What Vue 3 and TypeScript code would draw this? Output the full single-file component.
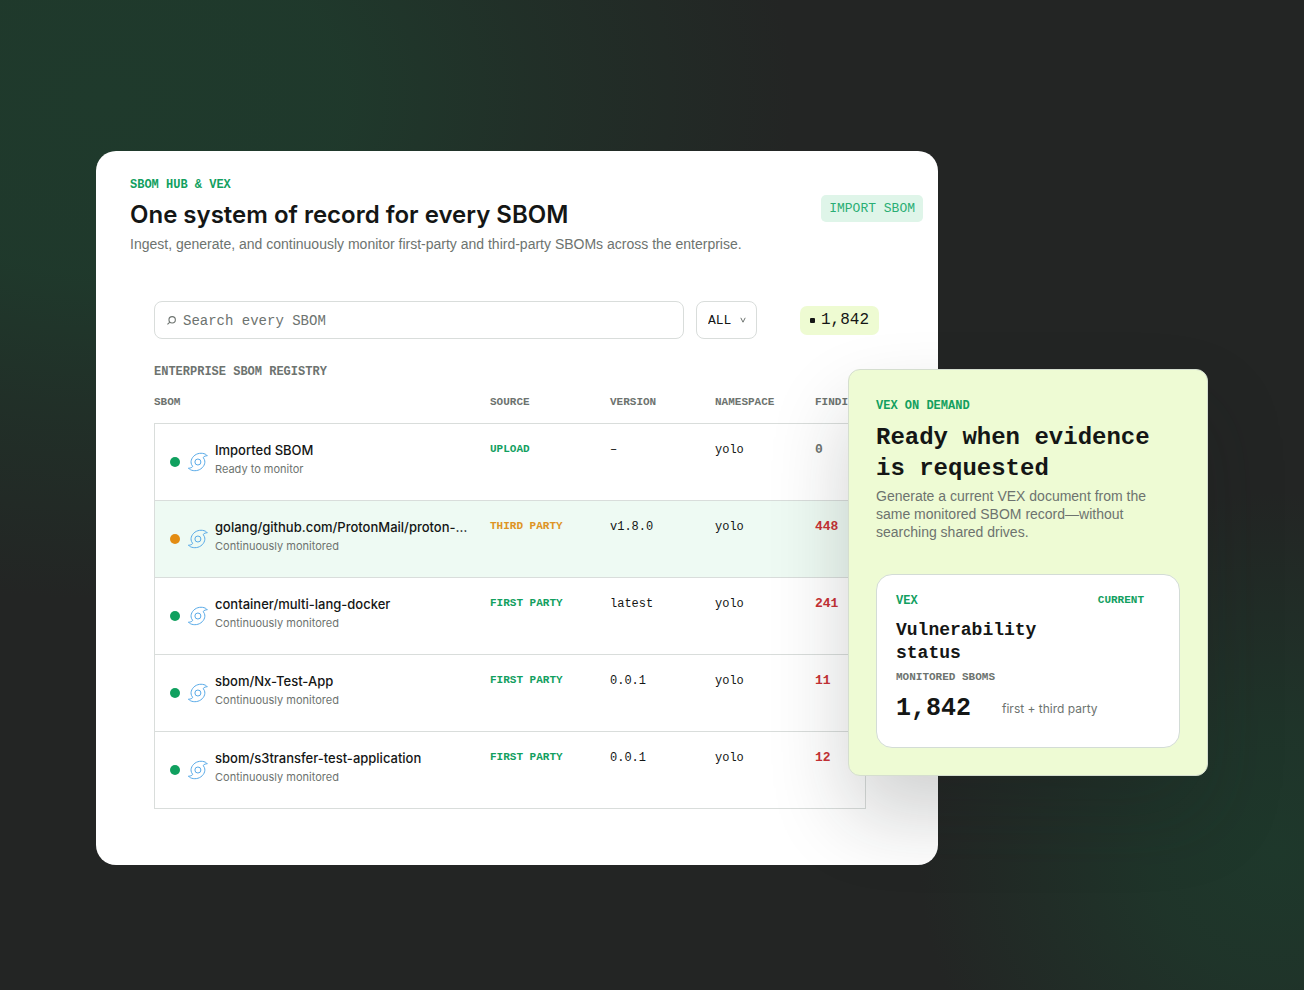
<script setup lang="ts">
import { ref } from 'vue'

interface SbomRow {
  name: string
  note: string
  source: string
  version: string
  namespace: string
  findings: number
  status: 'ok' | 'warn'
}

const rows: SbomRow[] = [
  { name: 'Imported SBOM', note: 'Ready to monitor', source: 'UPLOAD', version: '–', namespace: 'yolo', findings: 0, status: 'ok' },
  { name: 'golang/github.com/ProtonMail/proton-…', note: 'Continuously monitored', source: 'THIRD PARTY', version: 'v1.8.0', namespace: 'yolo', findings: 448, status: 'warn' },
  { name: 'container/multi-lang-docker', note: 'Continuously monitored', source: 'FIRST PARTY', version: 'latest', namespace: 'yolo', findings: 241, status: 'ok' },
  { name: 'sbom/Nx-Test-App', note: 'Continuously monitored', source: 'FIRST PARTY', version: '0.0.1', namespace: 'yolo', findings: 11, status: 'ok' },
  { name: 'sbom/s3transfer-test-application', note: 'Continuously monitored', source: 'FIRST PARTY', version: '0.0.1', namespace: 'yolo', findings: 12, status: 'ok' },
]

const query = ref('')
const filter = ref('ALL')
</script>

<template>
  <main class="stage">
    <div class="scene">
      <section class="hub">
        <header class="hub-head">
          <div>
            <p class="eyebrow">SBOM HUB &amp; VEX</p>
            <h1>One system of record for every SBOM</h1>
            <p class="lead">Ingest, generate, and continuously monitor first-party and third-party SBOMs across the enterprise.</p>
          </div>
          <button class="import" type="button">IMPORT SBOM</button>
        </header>

        <div class="hub-body">
          <div class="toolbar">
            <label class="search">
              <svg viewBox="0 0 10 10" aria-hidden="true">
                <circle cx="5.6" cy="4.4" r="2.9" />
                <path d="M3.5 6.5 1.3 8.6" />
              </svg>
              <input v-model="query" type="text" placeholder="Search every SBOM" aria-label="Search every SBOM" />
            </label>
            <label class="filter">
              <select v-model="filter" aria-label="Filter">
                <option value="ALL">ALL</option>
              </select>
              <svg viewBox="0 0 6 6" aria-hidden="true"><path d="M.8 .8 3 5.2 5.2 .8" /></svg>
            </label>
            <span class="count"><i></i>1,842</span>
          </div>

          <h2>ENTERPRISE SBOM REGISTRY</h2>

          <table>
            <colgroup>
              <col class="c-name" /><col class="c-source" /><col class="c-version" /><col class="c-space" /><col />
            </colgroup>
            <thead>
              <tr>
                <th scope="col">SBOM</th>
                <th scope="col">SOURCE</th>
                <th scope="col">VERSION</th>
                <th scope="col">NAMESPACE</th>
                <th scope="col">FINDINGS</th>
              </tr>
            </thead>
            <tbody>
              <tr v-for="row in rows" :key="row.name" :class="row.status">
                <td>
                  <div class="item">
                    <span class="dot"></span>
                    <svg class="swirl" viewBox="0 0 20 20" aria-hidden="true">
                      <path d="M19.3 3.8C17.4 1.2 12.3.4 8.4 2.3 4.3 4.3 2 8.9 3.5 12.4 3.8 13.2 4.2 13.9 4.7 14.5 3.6 15.7 2.2 16.3.4 16.1 2.5 18.8 7.6 19.5 11.4 17.7 15.6 15.7 17.9 11.1 16.4 7.6 16.1 6.8 15.7 6.1 15.2 5.5 16.3 4.3 17.6 3.6 19.3 3.8Z" />
                      <circle cx="9.9" cy="10" r="3" />
                    </svg>
                    <div class="item-text">
                      <strong>{{ row.name }}</strong>
                      <small>{{ row.note }}</small>
                    </div>
                  </div>
                </td>
                <td class="source">{{ row.source }}</td>
                <td>{{ row.version }}</td>
                <td>{{ row.namespace }}</td>
                <td class="findings" :class="{ none: row.findings === 0 }">{{ row.findings }}</td>
              </tr>
            </tbody>
          </table>
        </div>
      </section>

      <aside class="vex">
        <p class="eyebrow">VEX ON DEMAND</p>
        <h2>Ready when evidence is requested</h2>
        <p class="vex-lead">Generate a current VEX document from the same monitored SBOM record—without searching shared drives.</p>
        <article class="doc">
          <div class="doc-head">
            <span class="eyebrow">VEX</span>
            <span class="current">CURRENT</span>
          </div>
          <h3>Vulnerability status</h3>
          <p class="doc-label">MONITORED SBOMS</p>
          <div class="doc-total">
            <strong>1,842</strong>
            <span>first + third party</span>
          </div>
        </article>
      </aside>
    </div>
  </main>
</template>

<style>
body {
  margin: 0;
  background: #232524;
}
</style>

<style scoped>
* {
  box-sizing: border-box;
}
p, h1, h2, h3 {
  margin: 0;
}
.stage {
  --mono: "Liberation Mono", monospace;
  --copy: "Liberation Sans", Arial, sans-serif;
  --green: #12a05f;
  --ink: #141615;
  --muted: #6d736f;
  --line: #d9dddb;
  min-height: 100vh;
  padding: 151px 96px 125px;
  font-family: Inter, sans-serif;
  color: var(--ink);
  background:
    radial-gradient(ellipse 690px 500px at 8% 10%, #1f3a2c 0%, #1f3a2cf0 35%, #1f3a2c80 62%, #1f3a2c00 100%),
    radial-gradient(ellipse 360px 360px at 98% 86%, #1e382b 0%, #1e382bcc 35%, #1e382b00 100%),
    #232524;
}
.scene {
  position: relative;
}
.hub {
  margin-right: 270px;
  padding: 25px 0 56px;
  border-radius: 20px;
  background: #fff;
  overflow: hidden;
}
.hub-head {
  display: flex;
  align-items: flex-start;
  justify-content: space-between;
  padding: 0 15px 12px 34px;
}
.eyebrow {
  font: 700 12px/18px var(--mono);
  color: var(--green);
}
h1 {
  margin: 5px 0 3px;
  font-size: 24px;
  font-weight: 600;
  line-height: 32px;
}
.lead {
  font: 14px/20px var(--copy);
  color: var(--muted);
}
.import {
  flex: none;
  height: 27px;
  margin-top: 19px;
  padding: 0 8px;
  border: 0;
  border-radius: 5px;
  background: #dff5e9;
  font: 13px/27px var(--mono);
  color: #2aae74;
}
.hub-body {
  padding: 35px 59px 0 58px;
}
.toolbar {
  display: flex;
  align-items: center;
  gap: 12px;
}
.search, .filter {
  display: flex;
  align-items: center;
  height: 38px;
  border: 1px solid var(--line);
  border-radius: 8px;
}
.search {
  flex: 1;
  gap: 6px;
  padding: 0 11px;
}
svg {
  flex: none;
  fill: none;
  stroke: var(--muted);
}
.search svg {
  width: 11px;
  height: 11px;
}
input {
  flex: 1;
  min-width: 0;
  padding: 2px 0 0;
  border: 0;
  outline: 0;
  background: none;
  font: 14px/20px var(--mono);
  color: var(--ink);
}
input::placeholder {
  color: var(--muted);
  opacity: 1;
}
.filter {
  width: 61px;
  padding: 0 10px 0 11px;
  justify-content: space-between;
}
.filter select {
  width: 26px;
  padding: 2px 0 0;
  border: 0;
  outline: 0;
  appearance: none;
  background: none;
  font: 13px/20px var(--mono);
  color: var(--ink);
}
.filter svg {
  width: 6px;
  height: 6px;
}
.count {
  display: flex;
  align-items: center;
  gap: 6px;
  height: 29px;
  margin-left: 31px;
  padding: 0 10px;
  border-radius: 7px;
  background: #eefbd2;
  font: 16px/28px var(--mono);
}
.count i {
  width: 5px;
  height: 5px;
  border-radius: 1px;
  background: var(--ink);
}
.hub-body h2 {
  margin: 24px 0 10px;
  font: 700 12px/18px var(--mono);
  color: var(--muted);
}
table {
  width: calc(100% - 13px);
  table-layout: fixed;
  border-collapse: separate;
  border-spacing: 0;
}
.c-name { width: 336px; }
.c-source { width: 120px; }
.c-version { width: 105px; }
.c-space { width: 100px; }
th {
  height: 32px;
  padding: 0 0 10px;
  font: 700 11px/18px var(--mono);
  text-align: left;
  color: var(--muted);
}
td {
  height: 77px;
  padding: 17px 0 0;
  border-bottom: 1px solid var(--line);
  vertical-align: top;
  font: 12px/18px var(--mono);
}
tbody tr:first-child td {
  height: 78px;
  border-top: 1px solid var(--line);
}
td:first-child {
  border-left: 1px solid var(--line);
}
td:last-child {
  border-right: 1px solid var(--line);
}
.warn td {
  background: #eefaf3;
}
.item {
  display: flex;
  align-items: center;
  height: 42px;
  padding-left: 15px;
}
.dot {
  width: 10px;
  height: 10px;
  margin-right: 8px;
  border-radius: 50%;
  background: #10a05f;
}
.warn .dot {
  background: #e38c12;
}
.swirl {
  width: 20px;
  height: 20px;
  margin-right: 7px;
  stroke: #58aae8;
  stroke-linejoin: round;
}
.item-text {
  display: flex;
  flex-direction: column;
  padding-bottom: 5px;
  font-family: Inter, sans-serif;
  white-space: nowrap;
}
.item-text strong {
  font-size: 13px;
  font-weight: 500;
  line-height: 19px;
}
.item-text small {
  font-size: 11px;
  line-height: 18px;
  color: var(--muted);
}
.source {
  font-size: 11px;
  font-weight: 700;
  line-height: 16px;
  color: var(--green);
}
.warn .source {
  color: #de9424;
}
.findings {
  font-size: 13px;
  font-weight: 700;
  color: #c93236;
}
.findings.none {
  color: var(--muted);
}
.vex {
  position: absolute;
  top: 218px;
  right: 0;
  width: 360px;
  padding: 27px;
  border: 1px solid #d5decf;
  border-radius: 12px;
  background: #eefbd4;
  box-shadow: 0 40px 80px rgba(24, 32, 28, 0.2);
}
.vex h2 {
  margin: 7px 0 3px;
  font: 700 24px/31px var(--mono);
}
.vex-lead {
  font: 14px/18px var(--copy);
  color: var(--muted);
}
.doc {
  margin-top: 33px;
  padding: 17px 19px 21px;
  border: 1px solid #d3dcd6;
  border-radius: 16px;
  background: #fff;
}
.doc-head {
  display: flex;
  justify-content: space-between;
  padding-right: 16px;
}
.current, .doc-label {
  font: 700 11px/16px var(--mono);
  color: var(--green);
}
.doc h3 {
  width: 180px;
  margin: 9px 0 4px;
  font: 700 18px/23px var(--mono);
}
.doc-label {
  color: var(--muted);
}
.doc-total {
  display: flex;
  align-items: center;
  gap: 31px;
  margin-top: 7px;
}
.doc-total strong {
  font: 700 25px/34px var(--mono);
}
.doc-total span {
  font-size: 12px;
  line-height: 16px;
  color: var(--muted);
}
</style>
